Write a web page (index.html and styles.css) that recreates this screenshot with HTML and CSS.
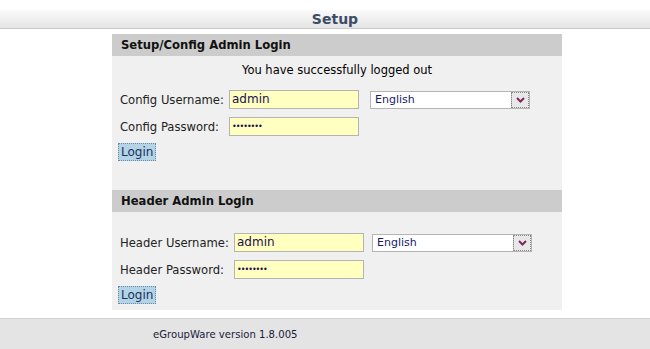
FILE: index.html
```html
<!DOCTYPE html>
<html>
<head>
<meta charset="utf-8">
<link rel="stylesheet" href="styles.css">
</head>
<body>
<div class="topbar">Setup</div>
<div class="panel">
  <div class="sect-head">Setup/Config Admin Login</div>
  <div class="msg">You have successfully logged out</div>
  <div class="form form-config">
    <div class="row">
      <span class="lbl">Config Username:</span>
      <span class="inp">admin</span>
      <span class="sel"><span class="sel-text">English</span><span class="sel-btn"><svg width="9" height="6" viewBox="0 0 9 6"><path d="M1 1 L4.5 4.5 L8 1" fill="none" stroke="#7a2a5e" stroke-width="2"/></svg></span></span>
    </div>
    <div class="row">
      <span class="lbl">Config Password:</span>
      <span class="inp pw">&#8226;&#8226;&#8226;&#8226;&#8226;&#8226;&#8226;&#8226;</span>
    </div>
    <div class="btnrow"><span class="btn">Login</span></div>
  </div>
  <div class="sect-head">Header Admin Login</div>
  <div class="form form-header">
    <div class="row">
      <span class="lbl">Header Username:</span>
      <span class="inp">admin</span>
      <span class="sel"><span class="sel-text">English</span><span class="sel-btn"><svg width="9" height="6" viewBox="0 0 9 6"><path d="M1 1 L4.5 4.5 L8 1" fill="none" stroke="#7a2a5e" stroke-width="2"/></svg></span></span>
    </div>
    <div class="row">
      <span class="lbl">Header Password:</span>
      <span class="inp pw">&#8226;&#8226;&#8226;&#8226;&#8226;&#8226;&#8226;&#8226;</span>
    </div>
    <div class="btnrow"><span class="btn">Login</span></div>
  </div>
</div>
<div class="footer"><span class="ver">eGroupWare version 1.8.005</span></div>
</body>
</html>
```
FILE: styles.css
```css
html, body { margin: 0; padding: 0; background: #fff; }
body { font-family: "DejaVu Sans", Verdana, sans-serif; font-size: 11px; color: #000; width: 650px; height: 349px; overflow: hidden; }
.topbar {
  margin-top: 10px; height: 18px; line-height: 18px;
  background: linear-gradient(#fafafa, #e4e4e4);
  border-bottom: 1px solid #c8c8c8;
  text-align: center; padding-left: 20px; font-weight: bold; font-size: 14px; color: #3d4c66;
}
.panel { width: 450px; margin: 5px 0 0 112px; background: #f0f0f0; padding-bottom: 5px; }
.sect-head { background: #cccccc; height: 22px; line-height: 23px; padding-left: 9px; font-weight: bold; font-size: 11.6px; color: #111; }
.msg { text-align: center; height: 30px; line-height: 29px; font-size: 11.5px; }
.form { padding-left: 8px; }
.form-config { padding-bottom: 28px; }
.form-header { padding-top: 17px; }
.row { display: flex; align-items: center; height: 27px; }
.lbl { width: 109px; font-size: 11.6px; color: #222; white-space: nowrap; }
.form-header .lbl { width: 114px; }
.inp { box-sizing: border-box; width: 130px; height: 19px; background: #ffffc0; border: 1px solid #b4b4b4; font-size: 12px; line-height: 17px; padding-left: 2px; color: #1a1050; }
.inp.pw { font-size: 8px; letter-spacing: -1px; }
.sel { box-sizing: border-box; display: flex; margin-left: 11px; width: 160px; height: 18px; border: 1px solid #b4b4b4; background: #fff; }
.form-header .sel { margin-left: 8px; }
.sel-text { flex: 1; padding-left: 4px; line-height: 16px; font-size: 11px; color: #1a1a6a; }
.sel-btn { width: 17px; background: #e8e8e8; border-left: 1px solid #c0c0c0; outline: 1px dotted #888; outline-offset: -1px; display: flex; align-items: center; justify-content: center; }
.btnrow { height: 20px; margin-top: 2px; display: flex; align-items: center; }
.btn { box-sizing: border-box; height: 18px; line-height: 16px; padding: 0 2px; background: #b2d4e6; border: 1px dotted #6a8aa8; font-size: 12px; color: #1a3060; margin-left: -2px; }
.footer { margin-top: 8px; height: 40px; background: #e4e4e4; border-top: 1px solid #d0d0d0; }
.ver { display: block; padding: 10px 0 0 153px; font-size: 10.1px; color: #1a1a3a; }
```
